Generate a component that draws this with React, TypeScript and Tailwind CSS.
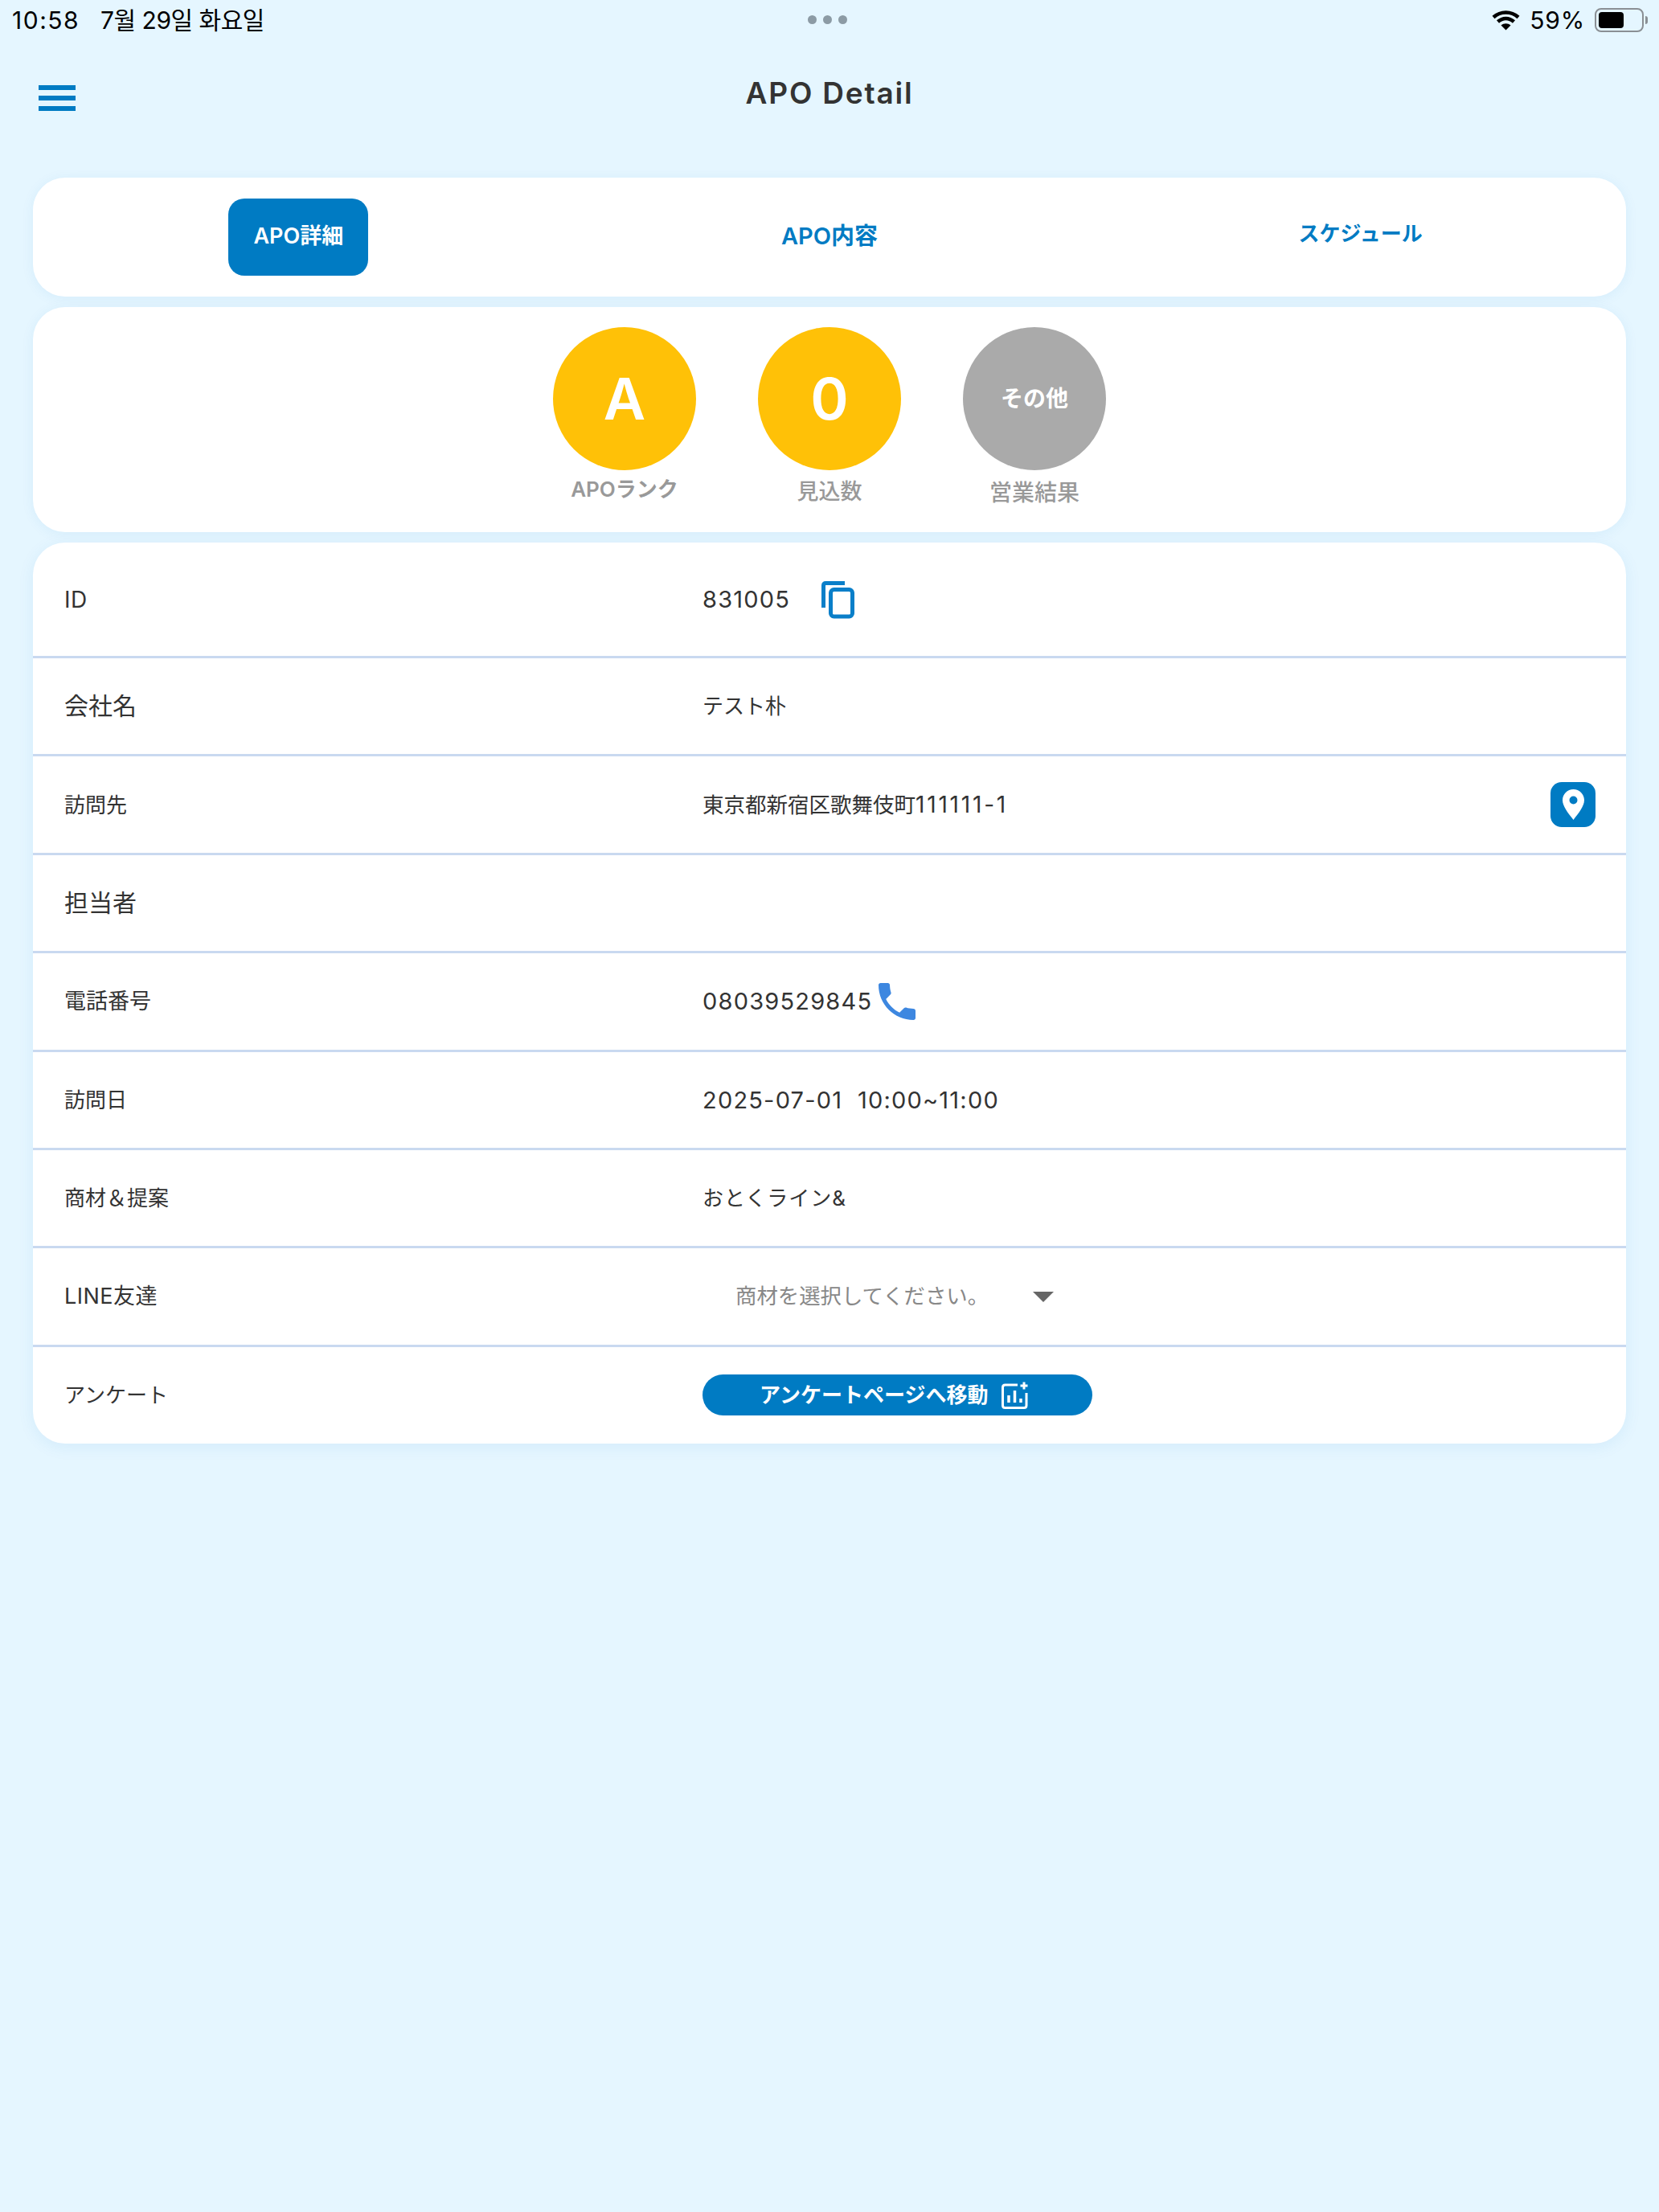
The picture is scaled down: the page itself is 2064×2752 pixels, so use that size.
import type { ReactNode } from "react";

const sans = "font-['Inter','Noto_Sans_CJK_JP',sans-serif]";

function WifiIcon() {
  return (
    <svg width="35" height="26" viewBox="0 0 35 26" fill="none">
      <path d="M2 9.5C11 1.5 24 1.5 33 9.5" stroke="#000" strokeWidth="4.5" />
      <path d="M7.5 15C13.5 9.5 21.5 9.5 27.5 15" stroke="#000" strokeWidth="4.5" />
      <path d="M17.5 25.5L11.5 19.5C15 16.5 20 16.5 23.5 19.5Z" fill="#000" />
    </svg>
  );
}

function Battery() {
  return (
    <div className="flex items-center">
      <div className="h-[30px] w-[61px] rounded-[8px] border-2 border-[#8a8f94] p-[3px]">
        <div className="h-full w-[31px] rounded-[4px] bg-black" />
      </div>
      <div className="ml-[2px] h-[10px] w-[3px] rounded-r-full bg-[#8a8f94]" />
    </div>
  );
}

function StatusBar() {
  return (
    <div className="relative flex h-[50px] items-center justify-between pl-[15px] pr-[14px] font-['Inter','Noto_Sans_CJK_KR',sans-serif] text-[30px] text-black">
      <div className="flex items-center gap-[26px]">
        <span className="tracking-[1.5px]">10:58</span>
        <span className="tracking-[-0.5px]">7월 29일 화요일</span>
      </div>
      <div className="absolute left-[1005px] top-[19px] flex gap-[8px]">
        <span className="h-[11px] w-[11px] rounded-full bg-[#8c9ba5]" />
        <span className="h-[11px] w-[11px] rounded-full bg-[#8c9ba5]" />
        <span className="h-[11px] w-[11px] rounded-full bg-[#8c9ba5]" />
      </div>
      <div className="flex items-center gap-[12px]">
        <WifiIcon />
        <span className="tracking-[0.8px]">59%</span>
        <Battery />
      </div>
    </div>
  );
}

function Header() {
  return (
    <div className="relative flex h-[132px] items-center justify-center">
      <div className="absolute left-[48px] top-[56px] flex w-[46px] flex-col gap-[7px]">
        <span className="h-[6px] bg-[#007bc3]" />
        <span className="h-[6px] bg-[#007bc3]" />
        <span className="h-[6px] bg-[#007bc3]" />
      </div>
      <h1 className={`text-[37px] font-semibold tracking-[1.8px] text-[#333] ${sans}`}>APO Detail</h1>
    </div>
  );
}

function Tabs() {
  return (
    <div className={`mt-[39px] grid h-[148px] grid-cols-3 items-center rounded-[40px] bg-white shadow-[0_2px_16px_rgba(0,110,200,0.07)] ${sans}`}>
      <div className="flex justify-center">
        <button className="h-[96px] w-[174px] rounded-[20px] bg-[#007bc3] pb-[2px] text-[27px] font-semibold text-white">APO詳細</button>
      </div>
      <div className="pb-[2px] text-center text-[29px] font-semibold text-[#007bc3]">APO内容</div>
      <div className="mb-[10px] text-center text-[26px] font-semibold text-[#007bc3]">スケジュール</div>
    </div>
  );
}

function Stat({ value, label, color, small, labelClass }: { value: string; label: string; color: string; small?: boolean; labelClass: string }) {
  return (
    <div className="flex w-[178px] flex-col items-center">
      <div className={`flex h-[178px] w-[178px] items-center justify-center rounded-full font-semibold text-white ${color} ${small ? "text-[28px]" : "text-[72px]"}`}>
        {value}
      </div>
      <div className={`whitespace-nowrap leading-[34px] text-[#999] ${labelClass}`}>{label}</div>
    </div>
  );
}

function Stats() {
  return (
    <div className={`mt-[13px] flex h-[280px] justify-center gap-[77px] rounded-[40px] bg-white pt-[25px] shadow-[0_2px_16px_rgba(0,110,200,0.07)] ${sans}`}>
      <Stat value="A" label="APOランク" color="bg-[#ffc107]" labelClass="mt-[7px] text-[26px] font-semibold" />
      <Stat value="0" label="見込数" color="bg-[#ffc107]" labelClass="mt-[10px] text-[27px] font-medium" />
      <Stat value="その他" label="営業結果" color="bg-[#aaaaaa]" small labelClass="mt-[11px] text-[28px] font-medium" />
    </div>
  );
}

function CopyIcon() {
  return (
    <svg width="42" height="48" viewBox="0 0 42 48" fill="none" stroke="#0a7fc9" strokeWidth="5">
      <path d="M3.5 34V6.5Q3.500 3.500 6.500 3.500H30" />
      <rect x="12.500" y="11.500" width="27" height="33.500" rx="4" />
    </svg>
  );
}

function PinButton() {
  return (
    <div className="flex h-[56px] w-[56px] items-center justify-center rounded-[14px] bg-[#007bc3]">
      <svg width="27" height="38" viewBox="0 0 27 38">
        <path fillRule="evenodd" fill="#fff" d="M13.500 0C6 0 0 6 0 13.500C0 22 9 32 13.500 38C18 32 27 22 27 13.500C27 6 21 0 13.500 0ZM13.500 8.500a5 5 0 1 1 0 10a5 5 0 1 1 0-10Z" />
      </svg>
    </div>
  );
}

function PhoneIcon() {
  return (
    <svg width="46" height="46" viewBox="3 3 18 18" fill="#3d87e0">
      <path d="M6.620 10.790c1.440 2.830 3.760 5.140 6.590 6.590l2.200-2.200c.27-.27.67-.36 1.020-.24 1.120.37 2.330.57 3.570.57.55 0 1 .45 1 1V20c0 .55-.45 1-1 1-9.390 0-17-7.610-17-17 0-.55.45-1 1-1h3.500c.55 0 1 .45 1 1 0 1.250.2 2.450.57 3.570.11.35.03.74-.25 1.020l-2.200 2.200z" />
    </svg>
  );
}

function SurveyIcon() {
  return (
    <svg width="34" height="34" viewBox="0 0 34 34" fill="none" stroke="#fff" strokeWidth="3">
      <path d="M20 4H4.500Q1.500 4 1.500 7V29.500Q1.500 32.500 4.500 32.500H28Q31 32.500 31 29.500V14" />
      <path d="M9 26V17M16.500 26V11M24 26V21" strokeWidth="3.500" />
      <path d="M28 0.500V9.500M23.500 5H32.500" />
    </svg>
  );
}

function Row({ label, labelClass, first, last, children }: { label: string; labelClass: string; first?: boolean; last?: boolean; children?: ReactNode }) {
  return (
    <div className={`flex items-center border-[#c9d9f0] pl-[39px] pr-[38px] ${first ? "h-[144px]" : last ? "h-[120px]" : "h-[122.400px]"} ${last ? "" : "border-b-[3px]"}`}>
      <div className={`w-[794px] shrink-0 text-[#333] ${labelClass}`}>{label}</div>
      <div className="flex flex-1 items-center text-[29px] tracking-[1.2px] text-[#333]">{children}</div>
    </div>
  );
}

function Details() {
  return (
    <div className={`mt-[13px] rounded-[40px] bg-white shadow-[0_4px_20px_rgba(0,110,200,0.08)] ${sans}`}>
      <Row label="ID" labelClass="text-[28px] tracking-[0.5px]" first>
        <span>831005</span>
        <span className="ml-[38px]"><CopyIcon /></span>
      </Row>
      <Row label="会社名" labelClass="text-[30px]">
        <span className="text-[26px] tracking-normal">テスト朴</span>
      </Row>
      <Row label="訪問先" labelClass="text-[26px]">
        <span className="flex-1 text-[26.500px] tracking-normal">
          東京都新宿区歌舞伎町<span className="text-[28px] tracking-[2.8px]">111111-1</span>
        </span>
        <PinButton />
      </Row>
      <Row label="担当者" labelClass="text-[30px]" />
      <Row label="電話番号" labelClass="text-[27px]">
        <span>08039529845</span>
        <span className="ml-[8px]"><PhoneIcon /></span>
      </Row>
      <Row label="訪問日" labelClass="text-[26px]">2025-07-01&nbsp;&nbsp;10:00~11:00</Row>
      <Row label="商材＆提案" labelClass="text-[26px]">
        <span className="text-[26px] tracking-[1px]">おとくライン&amp;</span>
      </Row>
      <Row label="LINE友達" labelClass="text-[27px] tracking-[0.5px]">
        <div className="ml-[41px] flex items-center">
          <span className="text-[26.400px] tracking-normal text-[#888]">商材を選択してください。</span>
          <span className="ml-[55px] h-0 w-0 border-x-[13px] border-t-[13px] border-x-transparent border-t-[#666]" />
        </div>
      </Row>
      <Row label="アンケート" labelClass="text-[26px]" last>
        <button className="flex h-[51px] w-[485px] items-center justify-start gap-[17px] rounded-full bg-[#007bc3] pl-[71px] text-[26px] font-semibold tracking-normal text-white">
          アンケートページへ移動
          <SurveyIcon />
        </button>
      </Row>
    </div>
  );
}

export default function App() {
  return (
    <div className="min-h-screen bg-[#e5f6ff]">
      <StatusBar />
      <Header />
      <div className="mx-[41px]">
        <Tabs />
        <Stats />
        <Details />
      </div>
    </div>
  );
}
